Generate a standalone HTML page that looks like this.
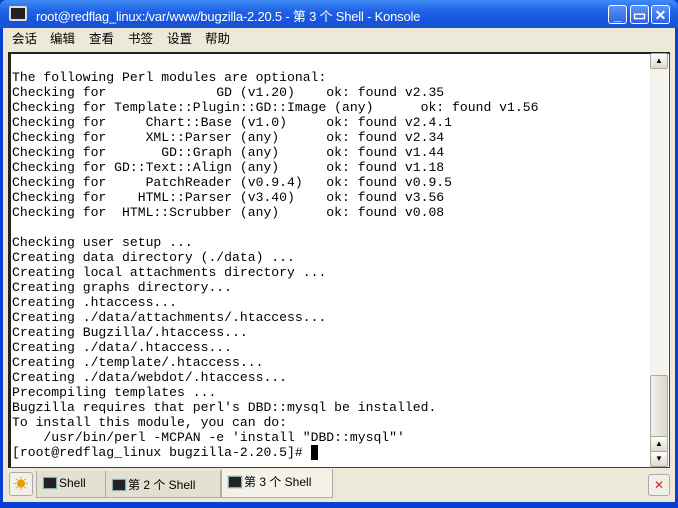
<!DOCTYPE html>
<html><head><meta charset="utf-8"><style>
*{margin:0;padding:0;box-sizing:border-box}
body{width:678px;height:508px;overflow:hidden;background:#0a3fcf;position:relative;font-family:"Liberation Sans","Noto Sans CJK SC",sans-serif}
#title{position:absolute;left:0;top:0;width:678px;height:28px;background:linear-gradient(#3f8cf5,#1f62e6 40%,#1553da 80%,#1a55cf);border-radius:6px 6px 0 0}
#title .t{position:absolute;left:36px;top:6px;color:#fff;font-size:13px;letter-spacing:-0.2px}
.ico{position:absolute;left:9px;top:6px;width:18px;height:15px;background:#222;border:2px solid #ddd;border-radius:2px}
.btn{position:absolute;top:5px;width:19px;height:19px;border:1px solid #fff;border-radius:3px;background:linear-gradient(#5b93f6,#2d63e8);color:#fff;font-size:14px;font-weight:bold;text-align:center;line-height:18px}
#frame{position:absolute;left:3px;top:28px;width:672px;height:474px;background:#ece9d8}
#menu{position:absolute;left:12px;top:27px;font-size:12.5px;color:#000}
#menu span{position:absolute;top:1px;white-space:nowrap}
#term{position:absolute;left:8px;top:52px;width:662px;height:416px;background:#fff;border:1px solid #444;border-left:3px solid #222;border-top:2px solid #222}
pre{position:absolute;left:12px;top:55px;font-family:"Liberation Mono",monospace;font-size:13.1px;line-height:15px;color:#000}
#sb{position:absolute;left:650px;top:54px;width:18px;height:412px;background:#f4f3ee}
.sbb{position:absolute;left:650px;width:18px;height:16px;background:linear-gradient(#fff,#dcd9cc);border:1px solid #a9a79c;border-radius:2px;font-size:8px;text-align:center;line-height:14px;color:#000}
#thumb{position:absolute;left:650px;top:375px;width:18px;height:62px;background:linear-gradient(90deg,#f0efe8,#dcdacd);border:1px solid #aaa;border-radius:2px}
.tab{position:absolute;top:471px;height:27px;background:#e3e0d2;border:1px solid #b0ad9f;border-top:none;font-size:12px;color:#000;padding:5px 0 0 6px;white-space:nowrap}
.ti{display:inline-block;width:14px;height:12px;background:#222;border:1px solid #8aa;vertical-align:-2px;margin-right:2px;box-shadow:0 0 0 1px #cdd}
</style></head><body>
<div id="title"><div class="ico"></div><div class="t">root@redflag_linux:/var/www/bugzilla-2.20.5 - 第 3 个 Shell - Konsole</div>
<div class="btn" style="left:608px">_</div><div class="btn" style="left:630px">▭</div><div class="btn" style="left:651px">✕</div></div>
<div id="frame"></div>
<div id="menu"><span style="left:0">会话</span><span style="left:38px">编辑</span><span style="left:77px">查看</span><span style="left:116px">书签</span><span style="left:155px">设置</span><span style="left:193px">帮助</span></div>
<div id="term"></div>
<pre>

The following Perl modules are optional:
Checking for              GD (v1.20)    ok: found v2.35
Checking for Template::Plugin::GD::Image (any)      ok: found v1.56
Checking for     Chart::Base (v1.0)     ok: found v2.4.1
Checking for     XML::Parser (any)      ok: found v2.34
Checking for       GD::Graph (any)      ok: found v1.44
Checking for GD::Text::Align (any)      ok: found v1.18
Checking for     PatchReader (v0.9.4)   ok: found v0.9.5
Checking for    HTML::Parser (v3.40)    ok: found v3.56
Checking for  HTML::Scrubber (any)      ok: found v0.08

Checking user setup ...
Creating data directory (./data) ...
Creating local attachments directory ...
Creating graphs directory...
Creating .htaccess...
Creating ./data/attachments/.htaccess...
Creating Bugzilla/.htaccess...
Creating ./data/.htaccess...
Creating ./template/.htaccess...
Creating ./data/webdot/.htaccess...
Precompiling templates ...
Bugzilla requires that perl's DBD::mysql be installed.
To install this module, you can do:
    /usr/bin/perl -MCPAN -e 'install "DBD::mysql"'
[root@redflag_linux bugzilla-2.20.5]# <span style="background:#000">&nbsp;</span></pre>
<div id="sb"></div>
<div class="sbb" style="top:53px">▲</div>
<div id="thumb"></div>
<div class="sbb" style="top:436px">▲</div>
<div class="sbb" style="top:451px">▼</div>
<div style="position:absolute;left:9px;top:472px;width:24px;height:24px;border:1px solid #aaa;border-radius:3px;background:#f2f0e6;text-align:center;font-size:14px;line-height:22px;color:#e8a000">☀</div>
<div class="tab" style="left:36px;width:70px"><span class="ti"></span>Shell</div>
<div class="tab" style="left:105px;width:116px"><span class="ti"></span>第 2 个 Shell</div>
<div class="tab" style="left:221px;width:112px;top:469px;height:29px;background:#f3f1e8;padding-top:4px"><span class="ti"></span>第 3 个 Shell</div>
<div style="position:absolute;left:648px;top:474px;width:22px;height:22px;border:1px solid #aaa;border-radius:3px;background:#f2f0e6;color:#d22;font-size:12px;text-align:center;line-height:20px">✕</div>
</body></html>
